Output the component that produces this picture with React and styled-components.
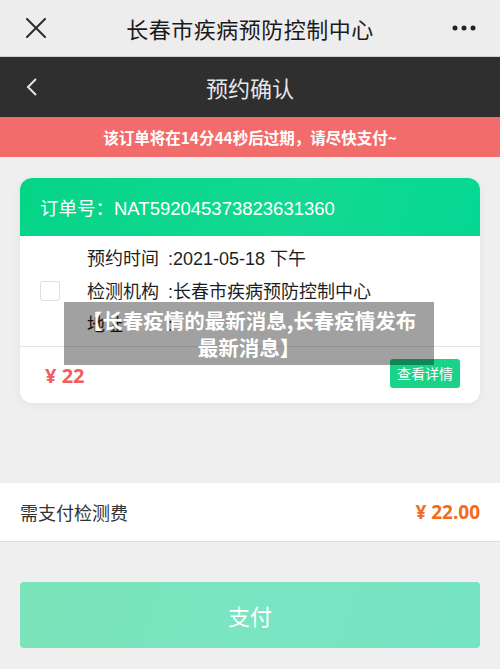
import React from "react";
import styled, { createGlobalStyle } from "styled-components";

const GlobalStyle = createGlobalStyle`
  html, body {
    margin: 0;
    padding: 0;
    background: #efefef;
    font-family: "Noto Sans CJK SC", "Noto Sans", sans-serif;
  }
`;

// --- Page shell ---
const Page = styled.div`
  width: 500px;
  height: 669px;
  overflow: hidden;
  background: #efefef;
  display: flex;
  flex-direction: column;
`;

// --- WeChat style top bar ---
const TopBar = styled.div`
  height: 57px;
  background: #ededed;
  display: grid;
  grid-template-columns: 76px 1fr 76px;
  align-items: center;
  border-bottom: 1px solid #cfcfcf;
  box-sizing: border-box;
`;

const TopTitle = styled.div`
  text-align: center;
  font-size: 22px;
  color: #1b1b1b;
  letter-spacing: 0.5px;
`;

const IconCell = styled.div`
  display: flex;
  align-items: center;
  justify-content: ${({ $align }) => ($align === "right" ? "flex-end" : "flex-start")};
  padding: ${({ $align }) => ($align === "right" ? "0 24px 0 0" : "0 0 0 26px")};
`;

// --- Dark nav bar ---
const NavBar = styled.div`
  height: 60px;
  background: #2f2f2f;
  display: grid;
  grid-template-columns: 76px 1fr 76px;
  align-items: center;
`;

const NavTitle = styled.div`
  text-align: center;
  font-size: 22px;
  color: #e6e6e6;
`;

// --- Expiry banner ---
const Banner = styled.div`
  height: 40px;
  background: #f36c6c;
  color: #fff;
  font-size: 15.5px;
  font-weight: 700;
  display: flex;
  align-items: center;
  justify-content: center;
`;

// --- Order card ---
const Card = styled.div`
  position: relative;
  margin: 21px 20px 0;
  background: #fff;
  border-radius: 12px;
  box-shadow: 0 2px 10px rgba(0, 0, 0, 0.06);
  overflow: hidden;
`;

const CardHead = styled.div`
  height: 58px;
  background: linear-gradient(110deg, #05d487 0%, #12d993 60%, #05d792 100%);
  color: #fff;
  font-size: 18.5px;
  font-family: "Liberation Sans", "Noto Sans CJK SC", sans-serif;
  display: flex;
  align-items: center;
  padding-left: 20px;
`;

const CardBody = styled.div`
  display: flex;
  align-items: center;
  height: 110px;
  border-bottom: 1px solid #e4e4e4;
`;

const Check = styled.div`
  width: 20px;
  height: 20px;
  margin: 0 27px 0 20px;
  border: 1px solid #dedede;
  border-radius: 3px;
  box-sizing: border-box;
`;

const InfoList = styled.div`
  display: flex;
  flex-direction: column;
  gap: 8px;
  padding-top: 2px;
`;

const InfoLine = styled.div`
  font-size: 18px;
  line-height: 25px;
  color: #1f1f1f;
  font-family: "Liberation Sans", "Noto Sans CJK SC", sans-serif;
`;

const InfoKey = styled.span`
  display: inline-block;
  width: 81px;
`;

const CardFoot = styled.div`
  height: 56px;
  display: flex;
  align-items: center;
  justify-content: space-between;
  padding: 0 20px 0 25px;
`;

const CardPrice = styled.div`
  font-size: 20px;
  font-weight: 700;
  color: #f25c5c;
  font-family: "Noto Sans", "Noto Sans CJK SC", sans-serif;
`;

const DetailButton = styled.div`
  background: #19d488;
  color: #fff;
  font-size: 14px;
  padding: 0 7px;
  height: 29px;
  line-height: 29px;
  border-radius: 3px;
  margin-top: -3px;
`;

// overlay caption that sits on top of the card
const Caption = styled.div`
  position: absolute;
  left: 44px;
  top: 124px;
  width: 370px;
  height: 63px;
  background: rgba(0, 0, 0, 0.37);
  display: flex;
  align-items: center;
  justify-content: center;
`;

const CaptionText = styled.div`
  max-width: 336px;
  color: #fff;
  font-size: 20.5px;
  font-weight: 700;
  line-height: 27px;
  text-align: center;
`;

// --- Fee row ---
const FeeRow = styled.div`
  margin-top: 80px;
  height: 58px;
  background: #fff;
  border-bottom: 1px solid #dcdcdc;
  display: flex;
  align-items: center;
  justify-content: space-between;
  padding: 0 20px;
`;

const FeeLabel = styled.div`
  font-size: 18px;
  color: #333;
`;

const FeeAmount = styled.div`
  font-size: 19px;
  font-weight: 700;
  color: #f36a1a;
  font-family: "Noto Sans", "Noto Sans CJK SC", sans-serif;
`;

// --- Pay button ---
const PayButton = styled.div`
  margin: 40px 20px 0;
  height: 66px;
  border-radius: 4px;
  background: linear-gradient(110deg, #7ae3b9 0%, #7ae5c2 50%, #76e3c3 100%);
  color: #fff;
  font-size: 22px;
  display: flex;
  align-items: center;
  justify-content: center;
`;

const CloseIcon = () => (
  <svg width="20" height="20" viewBox="0 0 20 20">
    <path d="M1 1 L19 19 M19 1 L1 19" stroke="#2a2a2a" strokeWidth="2" strokeLinecap="round" />
  </svg>
);

const MoreIcon = () => (
  <svg width="24" height="6" viewBox="0 0 24 6">
    <circle cx="3" cy="3" r="2.5" fill="#222" />
    <circle cx="12" cy="3" r="2.5" fill="#222" />
    <circle cx="21" cy="3" r="2.5" fill="#222" />
  </svg>
);

const BackIcon = () => (
  <svg width="12" height="20" viewBox="0 0 12 20">
    <path d="M10 2 L2 10 L10 18" fill="none" stroke="#e6e6e6" strokeWidth="2" />
  </svg>
);

const info = [
  ["预约时间", ":2021-05-18 下午"],
  ["检测机构", ":长春市疾病预防控制中心"],
  ["地址", ":"],
];

const App = () => (
  <Page>
    <GlobalStyle />
    <TopBar>
      <IconCell><CloseIcon /></IconCell>
      <TopTitle>长春市疾病预防控制中心</TopTitle>
      <IconCell $align="right"><MoreIcon /></IconCell>
    </TopBar>
    <NavBar>
      <IconCell><BackIcon /></IconCell>
      <NavTitle>预约确认</NavTitle>
      <div />
    </NavBar>
    <Banner>该订单将在14分44秒后过期，请尽快支付~</Banner>

    <Card>
      <CardHead>订单号：NAT592045373823631360</CardHead>
      <CardBody>
        <Check />
        <InfoList>
          {info.map(([key, value]) => (
            <InfoLine key={key}>
              <InfoKey>{key}</InfoKey>{value}
            </InfoLine>
          ))}
        </InfoList>
      </CardBody>
      <CardFoot>
        <CardPrice>¥ 22</CardPrice>
        <DetailButton>查看详情</DetailButton>
      </CardFoot>
      <Caption>
        <CaptionText>【长春疫情的最新消息,长春疫情发布最新消息】</CaptionText>
      </Caption>
    </Card>

    <FeeRow>
      <FeeLabel>需支付检测费</FeeLabel>
      <FeeAmount>¥ 22.00</FeeAmount>
    </FeeRow>
    <PayButton>支付</PayButton>
  </Page>
);

export default App;
